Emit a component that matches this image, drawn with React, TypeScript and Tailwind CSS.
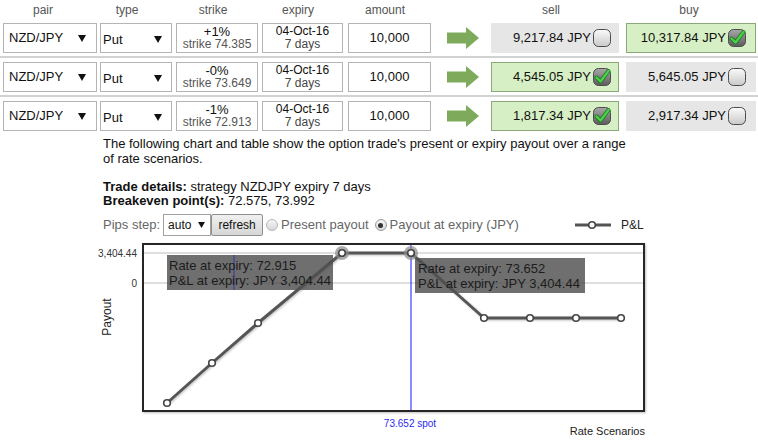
import React from "react";

type Row = {
  pct: string;
  strike: string;
  sell: string;
  buy: string;
  pick: "sell" | "buy";
};

const rows: Row[] = [
  { pct: "+1%", strike: "74.385", sell: "9,217.84", buy: "10,317.84", pick: "buy" },
  { pct: "-0%", strike: "73.649", sell: "4,545.05", buy: "5,645.05", pick: "sell" },
  { pct: "-1%", strike: "72.913", sell: "1,817.34", buy: "2,917.34", pick: "sell" },
];

function Caret({ size = 8 }: { size?: number }) {
  return (
    <svg width={size} height={size - 1} viewBox="0 0 8 7" className="shrink-0">
      <polygon points="0,0 8,0 4,7" fill="#111" />
    </svg>
  );
}

function CheckBox({ checked }: { checked: boolean }) {
  return (
    <svg width="18" height="18" viewBox="0 0 18 18" className="shrink-0 overflow-visible">
      <defs>
        <linearGradient id="cbOff" x1="0" y1="0" x2="0" y2="1">
          <stop offset="0" stopColor="#fbfbfb" />
          <stop offset="1" stopColor="#c9c9c9" />
        </linearGradient>
        <linearGradient id="cbOn" x1="0" y1="0" x2="0" y2="1">
          <stop offset="0" stopColor="#a8a8a8" />
          <stop offset="1" stopColor="#5c5c5c" />
        </linearGradient>
      </defs>
      <rect x="0.5" y="0.5" width="17" height="17" rx="5" fill={checked ? "url(#cbOn)" : "url(#cbOff)"} stroke="#4b4b4b" />
      {checked && (
        <>
          <path d="M3.5 9.5 L7.5 13.5 L15.5 3" fill="none" stroke="#1f7a1f" strokeWidth="4" strokeLinecap="round" strokeLinejoin="round" />
          <path d="M3.5 9.5 L7.5 13.5 L15.5 3" fill="none" stroke="#4cd04c" strokeWidth="2.4" strokeLinecap="round" strokeLinejoin="round" />
        </>
      )}
    </svg>
  );
}

function Arrow() {
  return (
    <svg width="32" height="22" viewBox="0 0 32 22">
      <polygon points="0,5.5 19,5.5 19,0 32,11 19,22 19,16.5 0,16.5" fill="#7dab5b" />
    </svg>
  );
}

function PriceCell({ value, on, width, pr, ml }: { value: string; on: boolean; width: string; pr: string; ml: string }) {
  return (
    <div
      className={`${width} ${ml} ${pr} h-[30px] flex items-center justify-end text-[13px] text-[#111] ${
        on ? "bg-[#d6efc4] border border-[#8aa878]" : "bg-[#e6e6e6] border border-[#e6e6e6]"
      }`}
    >
      <span className="whitespace-nowrap">{value} JPY</span>
      <span className="ml-[2px] flex">
        <CheckBox checked={on} />
      </span>
    </div>
  );
}

function TradeRow({ row, last }: { row: Row; last: boolean }) {
  const box = "h-[30px] border border-[#b4b4b4] bg-white";
  return (
    <div className={`flex items-center pt-[4px] pb-[3px] ${last ? "" : "border-b-2 border-[#d2d2d2]"}`}>
      <div className={`${box} ml-[3px] w-[94px] flex items-center justify-between pl-[5px] pr-[10px] text-[13px] text-[#111]`}>
        <span>NZD/JPY</span>
        <Caret />
      </div>
      <div className={`${box} ml-[3px] w-[72px] flex items-center justify-between pl-[2px] pr-[9px] pt-[3px] text-[13px] text-[#111]`}>
        <span>Put</span>
        <Caret />
      </div>
      <div className={`${box} ml-[4px] w-[82px] flex flex-col items-center justify-center text-[12px] leading-[13px]`}>
        <span className="text-[13px] text-[#111]">{row.pct}</span>
        <span className="text-[#555]">strike {row.strike}</span>
      </div>
      <div className={`${box} ml-[4px] w-[81px] flex flex-col items-center justify-center text-[12px] leading-[13px]`}>
        <span className="text-[#111]">04-Oct-16</span>
        <span className="text-[#444]">7 days</span>
      </div>
      <div className={`${box} ml-[5px] w-[83px] flex items-center justify-center text-[13px] text-[#111]`}>10,000</div>
      <div className="ml-[16px] w-[44px] flex items-center">
        <Arrow />
      </div>
      <PriceCell value={row.sell} on={row.pick === "sell"} width="w-[128px]" ml="ml-0" pr="pr-[7px]" />
      <PriceCell value={row.buy} on={row.pick === "buy"} width="w-[130px]" ml="ml-[7px]" pr="pr-[9px]" />
    </div>
  );
}

function Chart() {
  const pts: [number, number][] = [
    [167, 403],
    [212, 363],
    [258, 323],
    [342, 253],
    [411, 253],
    [484, 318],
    [530, 318],
    [576, 318],
    [621, 318],
  ];
  const line = pts.map((p) => p.join(",")).join(" ");
  return (
    <svg width="758" height="204" viewBox="0 238 758 204" className="block">
      <defs>
        <filter id="sh" x="-5%" y="-5%" width="110%" height="110%">
          <feDropShadow dx="1" dy="1" stdDeviation="0.8" floodColor="#000" floodOpacity="0.25" />
        </filter>
      </defs>
      <rect x="143" y="244" width="501" height="167" fill="#fff" stroke="#262626" strokeWidth="2" filter="url(#sh)" />
      <line x1="144" y1="253" x2="643" y2="253" stroke="#bdbdbd" />
      <line x1="144" y1="283" x2="643" y2="283" stroke="#bdbdbd" />
      <text x="137" y="257" textAnchor="end" fontSize="10" fill="#333">3,404.44</text>
      <text x="137" y="287" textAnchor="end" fontSize="10" fill="#333">0</text>
      <text x="111" y="317" textAnchor="middle" fontSize="12" fill="#222" transform="rotate(-90 111 317)">Payout</text>
      <line x1="411" y1="245" x2="411" y2="410" stroke="#1414ff" />
      <text x="410" y="427" textAnchor="middle" fontSize="10" fill="#2a2af0">73.652 spot</text>
      <text x="645" y="435" textAnchor="end" fontSize="11" fill="#222">Rate Scenarios</text>

      <polyline points={line} fill="none" stroke="#555" strokeWidth="3" strokeLinejoin="round" filter="url(#sh)" />
      <circle cx="342" cy="253" r="7" fill="#8a8a8a" opacity="0.7" />
      <circle cx="411" cy="253" r="7" fill="#8a8a8a" opacity="0.7" />
      {pts.map(([x, y]) => (
        <circle key={x} cx={x} cy={y} r="3.3" fill="#fff" stroke="#444" strokeWidth="1.6" />
      ))}

      <rect x="167" y="255" width="166" height="35" fill="#4f4f4f" opacity="0.82" />
      <line x1="234" y1="255" x2="234" y2="290" stroke="#3434a8" />
      <text x="169" y="270" fontSize="13" fill="#1c1c1c">Rate at expiry: 72.915</text>
      <text x="169" y="285" fontSize="13" fill="#1c1c1c">P&amp;L at expiry: JPY 3,404.44</text>

      <rect x="415" y="258" width="170" height="35" fill="#4f4f4f" opacity="0.82" />
      <text x="418" y="273" fontSize="13" fill="#1c1c1c">Rate at expiry: 73.652</text>
      <text x="418" y="288" fontSize="13" fill="#1c1c1c">P&amp;L at expiry: JPY 3,404.44</text>
    </svg>
  );
}

export default function App() {
  return (
    <div className="w-[758px] h-[442px] overflow-hidden bg-white font-['Liberation_Sans',Arial,sans-serif] text-[#111]">
      {/* column headings */}
      <div className="flex h-[19px] items-center text-[12px] text-[#555]">
        <div className="w-[86px] text-center">pair</div>
        <div className="w-[82px] text-center">type</div>
        <div className="w-[90px] text-center">strike</div>
        <div className="w-[80px] text-center">expiry</div>
        <div className="w-[94px] text-center">amount</div>
        <div className="w-[59px]" />
        <div className="w-[120px] text-center">sell</div>
        <div className="ml-[9px] w-[138px] text-center">buy</div>
      </div>

      {rows.map((r, i) => (
        <TradeRow key={i} row={r} last={i === rows.length - 1} />
      ))}

      <div className="pl-[103px] pt-[2px]">
        <p className="text-[13px] leading-[15px] text-[#111] w-[525px]">
          The following chart and table show the option trade's present or expiry payout over a range of rate scenarios.
        </p>
        <div className="mt-[14px] text-[13px] leading-[14px]">
          <div>
            <b>Trade details:</b> strategy NZDJPY expiry 7 days
          </div>
          <div>
            <b>Breakeven point(s):</b> 72.575, 73.992
          </div>
        </div>
        <div className="mt-[6px] flex h-[22px] items-center text-[13px] text-[#666]">
          <span>Pips step:</span>
          <div className="ml-[3px] flex h-[22px] w-[48px] items-center justify-between border border-[#a0a0a0] bg-white pl-[4px] pr-[5px] text-[12px] text-[#111]">
            <span>auto</span>
            <Caret size={7} />
          </div>
          <button className="flex h-[22px] w-[52px] items-center justify-center rounded-[2px] border border-[#8f8f8f] bg-gradient-to-b from-[#f0f0f0] to-[#d6d6d6] text-[12px] text-[#111]">
            refresh
          </button>
          <span className="ml-[3px] h-[12px] w-[12px] rounded-full border border-[#b8b8b8] bg-gradient-to-b from-[#f6f6f6] to-[#d8d8d8]" />
          <span className="ml-[3px]">Present payout</span>
          <span className="ml-[6px] flex h-[12px] w-[12px] items-center justify-center rounded-full border border-[#9a9a9a] bg-gradient-to-b from-[#f6f6f6] to-[#d8d8d8]">
            <span className="h-[5px] w-[5px] rounded-full bg-[#333]" />
          </span>
          <span className="ml-[3px]">Payout at expiry (JPY)</span>
          <svg width="36" height="10" viewBox="0 0 36 10" className="ml-[56px]">
            <line x1="0" y1="5" x2="36" y2="5" stroke="#555" strokeWidth="3" />
            <circle cx="17" cy="5" r="3.3" fill="#fff" stroke="#444" strokeWidth="1.6" />
          </svg>
          <span className="ml-[10px] text-[12px] text-[#222]">P&amp;L</span>
        </div>
      </div>

      <div className="mt-[2px]">
        <Chart />
      </div>
    </div>
  );
}
